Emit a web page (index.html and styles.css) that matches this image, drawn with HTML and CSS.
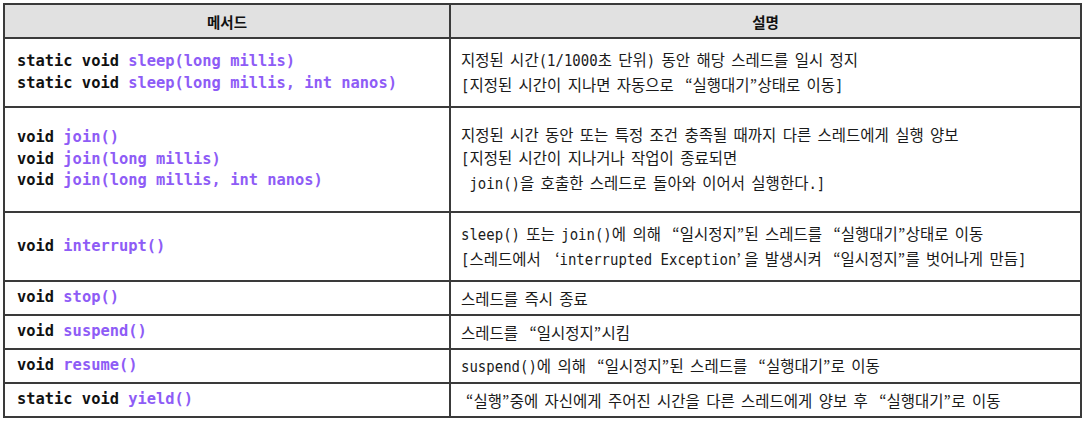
FILE: index.html
```html
<!DOCTYPE html>
<html lang="ko">
<head>
<meta charset="utf-8">
<link rel="stylesheet" href="styles.css">
</head>
<body>
<table class="tbl">
  <colgroup><col class="c-method"><col class="c-desc"></colgroup>
  <thead>
    <tr class="r-head"><th>메서드</th><th>설명</th></tr>
  </thead>
  <tbody>
    <tr class="r-1">
      <td class="m">static void <span class="fn">sleep(long millis)</span><br>static void <span class="fn">sleep(long millis, int nanos)</span></td>
      <td class="d">지정된 시간<span class="en">(1/1000</span>초 단위<span class="en">)</span> 동안 해당 스레드를 일시 정지<br><span class="en">[</span>지정된 시간이 지나면 자동으로 <span class="ql">“</span>실행대기<span class="qr">”</span>상태로 이동<span class="en">]</span></td>
    </tr>
    <tr class="r-2">
      <td class="m">void <span class="fn">join()</span><br>void <span class="fn">join(long millis)</span><br>void <span class="fn">join(long millis, int nanos)</span></td>
      <td class="d">지정된 시간 동안 또는 특정 조건 충족될 때까지 다른 스레드에게 실행 양보<br><span class="en">[</span>지정된 시간이 지나거나 작업이 종료되면<br><span class="en">&nbsp;join()</span>을 호출한 스레드로 돌아와 이어서 실행한다<span class="en">.]</span></td>
    </tr>
    <tr class="r-3">
      <td class="m">void <span class="fn">interrupt()</span></td>
      <td class="d"><span class="en">sleep()</span> 또는 <span class="en">join()</span>에 의해 <span class="ql">“</span>일시정지<span class="qr">”</span>된 스레드를 <span class="ql">“</span>실행대기<span class="qr">”</span>상태로 이동<br><span class="en">[</span>스레드에서 <span class="ql">‘</span><span class="en">interrupted Exception</span><span class="qr">’</span>을 발생시켜 <span class="ql">“</span>일시정지<span class="qr">”</span>를 벗어나게 만듬<span class="en">]</span></td>
    </tr>
    <tr class="r-s">
      <td class="m">void <span class="fn">stop()</span></td>
      <td class="d">스레드를 즉시 종료</td>
    </tr>
    <tr class="r-s">
      <td class="m">void <span class="fn">suspend()</span></td>
      <td class="d">스레드를 <span class="ql">“</span>일시정지<span class="qr">”</span>시킴</td>
    </tr>
    <tr class="r-s">
      <td class="m">void <span class="fn">resume()</span></td>
      <td class="d"><span class="en">suspend()</span>에 의해 <span class="ql">“</span>일시정지<span class="qr">”</span>된 스레드를 <span class="ql">“</span>실행대기<span class="qr">”</span>로 이동</td>
    </tr>
    <tr class="r-s">
      <td class="m">static void <span class="fn">yield()</span></td>
      <td class="d"><span class="ql">“</span>실행<span class="qr">”</span>중에 자신에게 주어진 시간을 다른 스레드에게 양보 후 <span class="ql">“</span>실행대기<span class="qr">”</span>로 이동</td>
    </tr>
  </tbody>
</table>
</body>
</html>
```
FILE: styles.css
```css
html, body {
  margin: 0;
  padding: 0;
  background: #ffffff;
}
body {
  padding: 3px;
}
.tbl {
  border-collapse: collapse;
  width: 1079px;
  table-layout: fixed;
  border: 2px solid #555555;
}
.c-method { width: 446px; }
.tbl th, .tbl td {
  border: 2px solid #3a3a3a;
  padding: 0;
  vertical-align: middle;
}
.tbl th {
  background: #e1e1e1;
  font-family: "Noto Sans CJK KR", sans-serif;
  font-weight: 700;
  font-size: 14.5px;
  color: #111;
  text-align: center;
}
.r-head { height: 34px; }
.r-1 { height: 69px; }
.r-2 { height: 105px; }
.r-3 { height: 69px; }
.r-s { height: 34px; }
.m {
  font-family: "DejaVu Sans Mono", monospace;
  font-weight: 700;
  font-size: 15.4px;
  line-height: 21.5px;
  color: #111111;
  padding-left: 12px !important;
}
.fn { color: #8e5cf6; }
.d {
  font-family: "Noto Sans CJK KR", sans-serif;
  font-size: 15.5px;
  line-height: 23px;
  word-spacing: 2px;
  color: #1a1a1a;
  padding-left: 10px !important;
}
.en {
  display: inline-block;
  font-family: "DejaVu Sans Mono", monospace;
  font-size: 14px;
  word-spacing: 0;
  white-space: pre;
  transform: scaleY(1.15);
  transform-origin: 0 68%;
}
.ql, .qr {
  display: inline-block;
}
.ql { width: 0.8em; text-align: right; }
.qr { width: 0.5em; text-align: left; }
```
